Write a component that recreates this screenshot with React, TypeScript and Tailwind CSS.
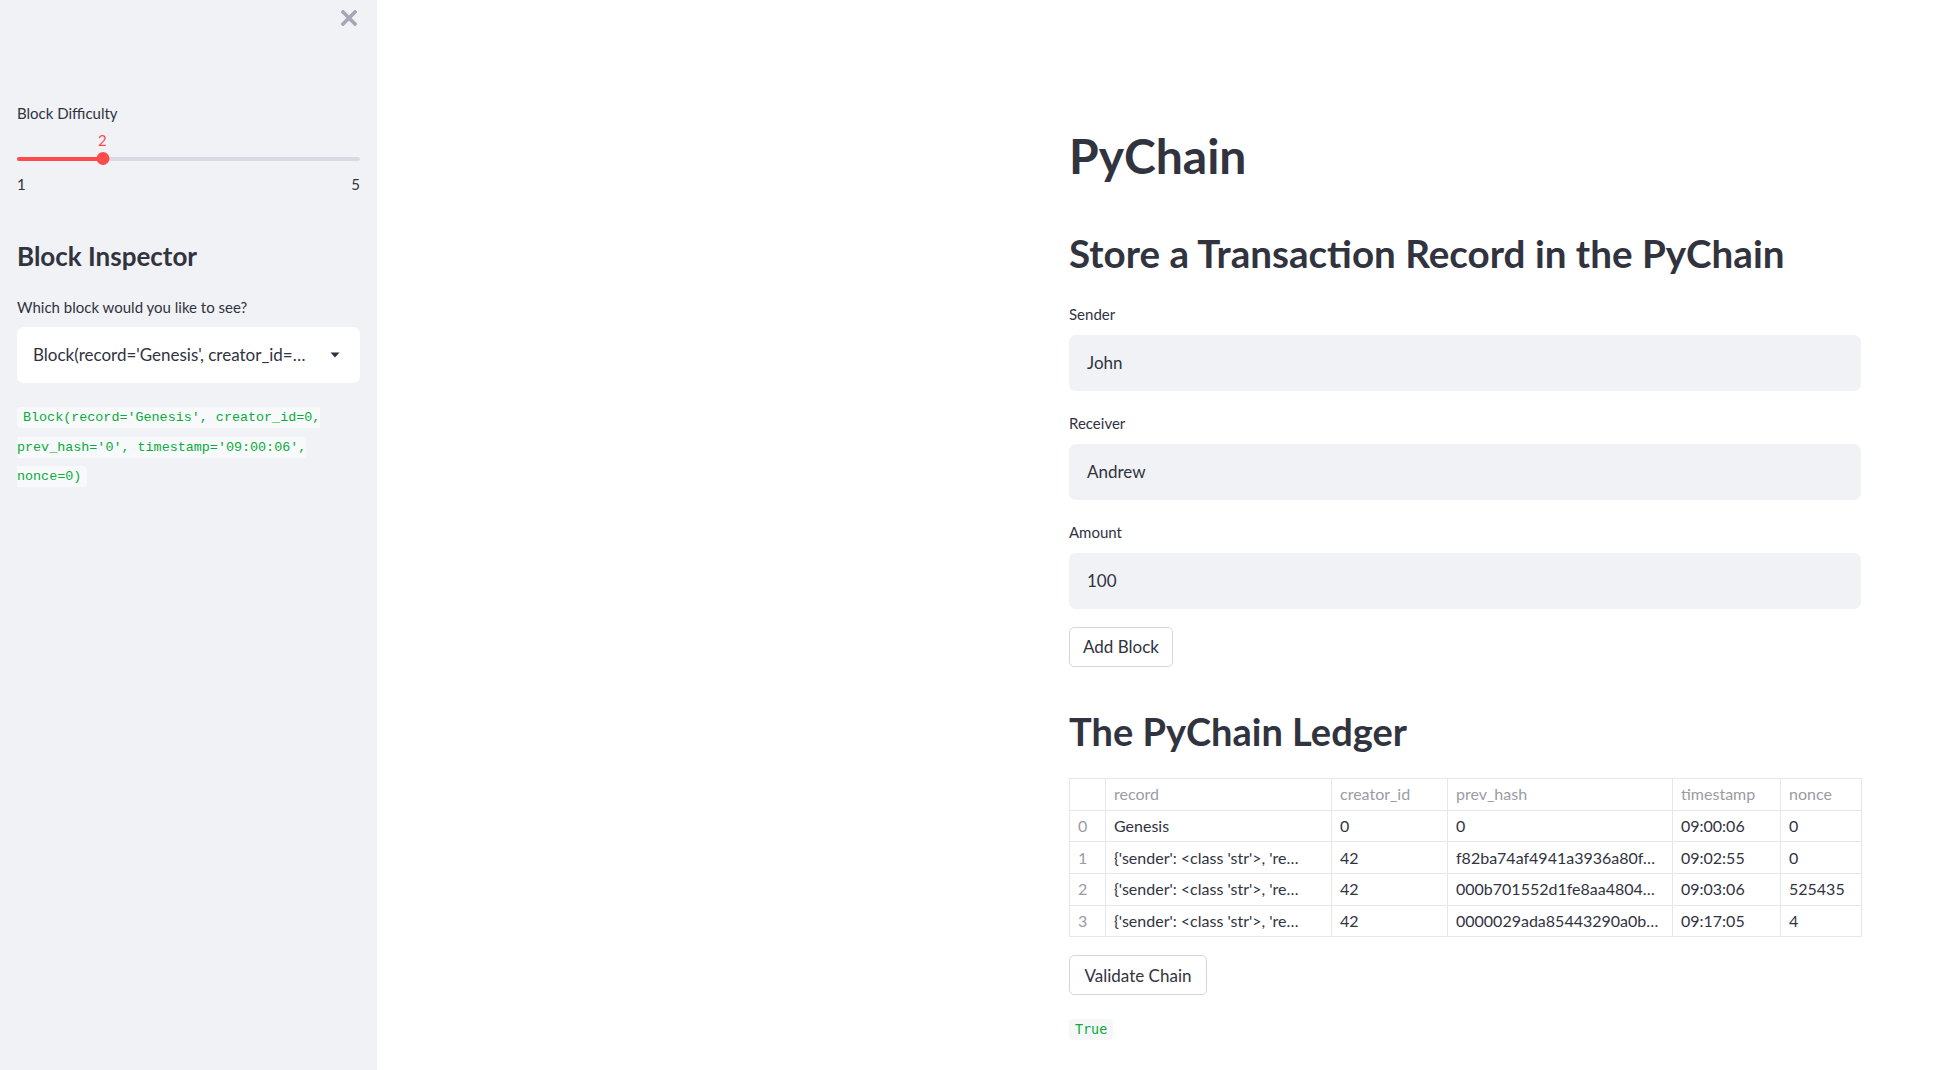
import React from 'react';

const rows = [
  { idx: '0', record: 'Genesis', creator: '0', prevHash: '0', time: '09:00:06', nonce: '0' },
  { idx: '1', record: "{'sender': <class 'str'>, 're…", creator: '42', prevHash: 'f82ba74af4941a3936a80f…', time: '09:02:55', nonce: '0' },
  { idx: '2', record: "{'sender': <class 'str'>, 're…", creator: '42', prevHash: '000b701552d1fe8aa4804…', time: '09:03:06', nonce: '525435' },
  { idx: '3', record: "{'sender': <class 'str'>, 're…", creator: '42', prevHash: '0000029ada85443290a0b…', time: '09:17:05', nonce: '4' },
];

function TextField({ label, value, top }: { label: string; value: string; top: string }) {
  return (
    <div className={top}>
      <div className="text-[15px] leading-[20px] text-[#31333f]">{label}</div>
      <div className="mt-[11px] flex h-[56px] items-center rounded-[7px] bg-[#f0f2f6] px-[18px] text-[17px] text-[#31333f]">
        {value}
      </div>
    </div>
  );
}

function Sidebar() {
  return (
    <aside className="flex h-[1070px] w-[377px] shrink-0 flex-col bg-[#f0f2f6] px-[17px]">
      <div className="mt-[10px] flex justify-end pr-[3px]">
        <svg width="16" height="16" viewBox="0 0 16 16" className="text-[#a3a8b4]">
          <path d="M2 2 L14 14 M14 2 L2 14" stroke="currentColor" strokeWidth="3.6" strokeLinecap="square" />
        </svg>
      </div>

      {/* difficulty slider */}
      <div className="mt-[77px] text-[15px] leading-[20px] text-[#31333f]">Block Difficulty</div>
      <div className="mt-[7px] pl-[81px] text-[15px] leading-[20px] text-[#ff4b4b]">2</div>
      <div className="relative mt-[2px] flex h-[13px] items-center">
        <div className="h-[4px] w-full rounded-full bg-[#d6dae3]">
          <div className="h-[4px] w-[25%] rounded-full bg-[#ff4b4b]"></div>
        </div>
        <div className="absolute left-[25%] top-0 h-[13px] w-[13px] -translate-x-1/2 rounded-full bg-[#ff4b4b]"></div>
      </div>
      <div className="mt-[9px] flex justify-between text-[15px] leading-[20px] text-[#31333f]">
        <span>1</span>
        <span>5</span>
      </div>

      <h2 className="mt-[45px] text-[26px] font-bold leading-[34px] text-[#31333f]">Block Inspector</h2>
      <div className="mt-[24px] text-[15px] leading-[20px] text-[#31333f]">Which block would you like to see?</div>
      <div className="mt-[10px] flex h-[56px] items-center rounded-[7px] bg-white pl-[16px] pr-[20px]">
        <div className="min-w-0 flex-1 whitespace-nowrap text-[17px] text-[#31333f]">
          Block(record='Genesis', creator_id=…
        </div>
        <svg width="10" height="6" viewBox="0 0 10 6" className="ml-[16px] shrink-0 text-[#31333f]">
          <path d="M0.5 0.5 H9.5 L5 5.5 Z" fill="currentColor" />
        </svg>
      </div>

      <p className="mt-[20px] font-['DejaVu_Sans_Mono',monospace] text-[13.4px] leading-[28.6px]">
        <code className="rounded-[4px] bg-[#f8f9fb] px-[6px] py-[3px] text-[#09ab3b] [box-decoration-break:slice]">
          Block(record='Genesis', creator_id=0, prev_hash='0', timestamp='09:00:06', nonce=0)
        </code>
      </p>
    </aside>
  );
}

function Ledger() {
  const th = 'h-[31.7px] border border-[#e6e7eb] px-[8px] text-left font-normal text-[#9a9ca3]';
  const td = 'h-[31.7px] whitespace-nowrap border border-[#e6e7eb] px-[8px] text-[#31333f]';
  return (
    <table className="mt-[23px] w-[792px] table-fixed border-collapse text-[16px]">
      <colgroup>
        <col className="w-[36px]" />
        <col className="w-[226px]" />
        <col className="w-[116px]" />
        <col className="w-[225px]" />
        <col className="w-[108px]" />
        <col className="w-[81px]" />
      </colgroup>
      <thead>
        <tr>
          <th className={th}></th>
          <th className={th}>record</th>
          <th className={th}>creator_id</th>
          <th className={th}>prev_hash</th>
          <th className={th}>timestamp</th>
          <th className={th}>nonce</th>
        </tr>
      </thead>
      <tbody>
        {rows.map((r) => (
          <tr key={r.idx}>
            <td className={td + ' !text-[#9a9ca3]'}>{r.idx}</td>
            <td className={td}>{r.record}</td>
            <td className={td}>{r.creator}</td>
            <td className={td}>{r.prevHash}</td>
            <td className={td}>{r.time}</td>
            <td className={td}>{r.nonce}</td>
          </tr>
        ))}
      </tbody>
    </table>
  );
}

export default function App() {
  return (
    <div className="flex h-[1070px] w-[1949px] overflow-hidden bg-white font-['Lato',sans-serif] text-[#31333f]">
      <Sidebar />
      <main className="flex-1 pl-[692px] pt-[128px]">
        <div className="w-[792px]">
          <h1 className="text-[48px] font-bold leading-[56px]">PyChain</h1>
          <h2 className="mt-[45px] text-[38.6px] font-bold leading-[48px]">Store a Transaction Record in the PyChain</h2>

          <TextField label="Sender" value="John" top="mt-[27px]" />
          <TextField label="Receiver" value="Andrew" top="mt-[22px]" />
          <TextField label="Amount" value="100" top="mt-[22px]" />

          <button className="mt-[18px] h-[40px] w-[104px] rounded-[5px] border border-[#d6d6d9] bg-white text-[17px] text-[#31333f]">
            Add Block
          </button>

          <h2 className="mt-[40px] text-[38px] font-bold leading-[48px]">The PyChain Ledger</h2>

          <Ledger />

          <button className="mt-[18px] h-[40px] w-[138px] rounded-[5px] border border-[#d6d6d9] bg-white text-[17px] text-[#31333f]">
            Validate Chain
          </button>

          <div className="mt-[21px]">
            <code className="rounded-[4px] bg-[#f6f7f9] px-[6px] py-[3px] font-['DejaVu_Sans_Mono',monospace] text-[13.4px] text-[#09ab3b]">
              True
            </code>
          </div>
        </div>
      </main>
    </div>
  );
}
